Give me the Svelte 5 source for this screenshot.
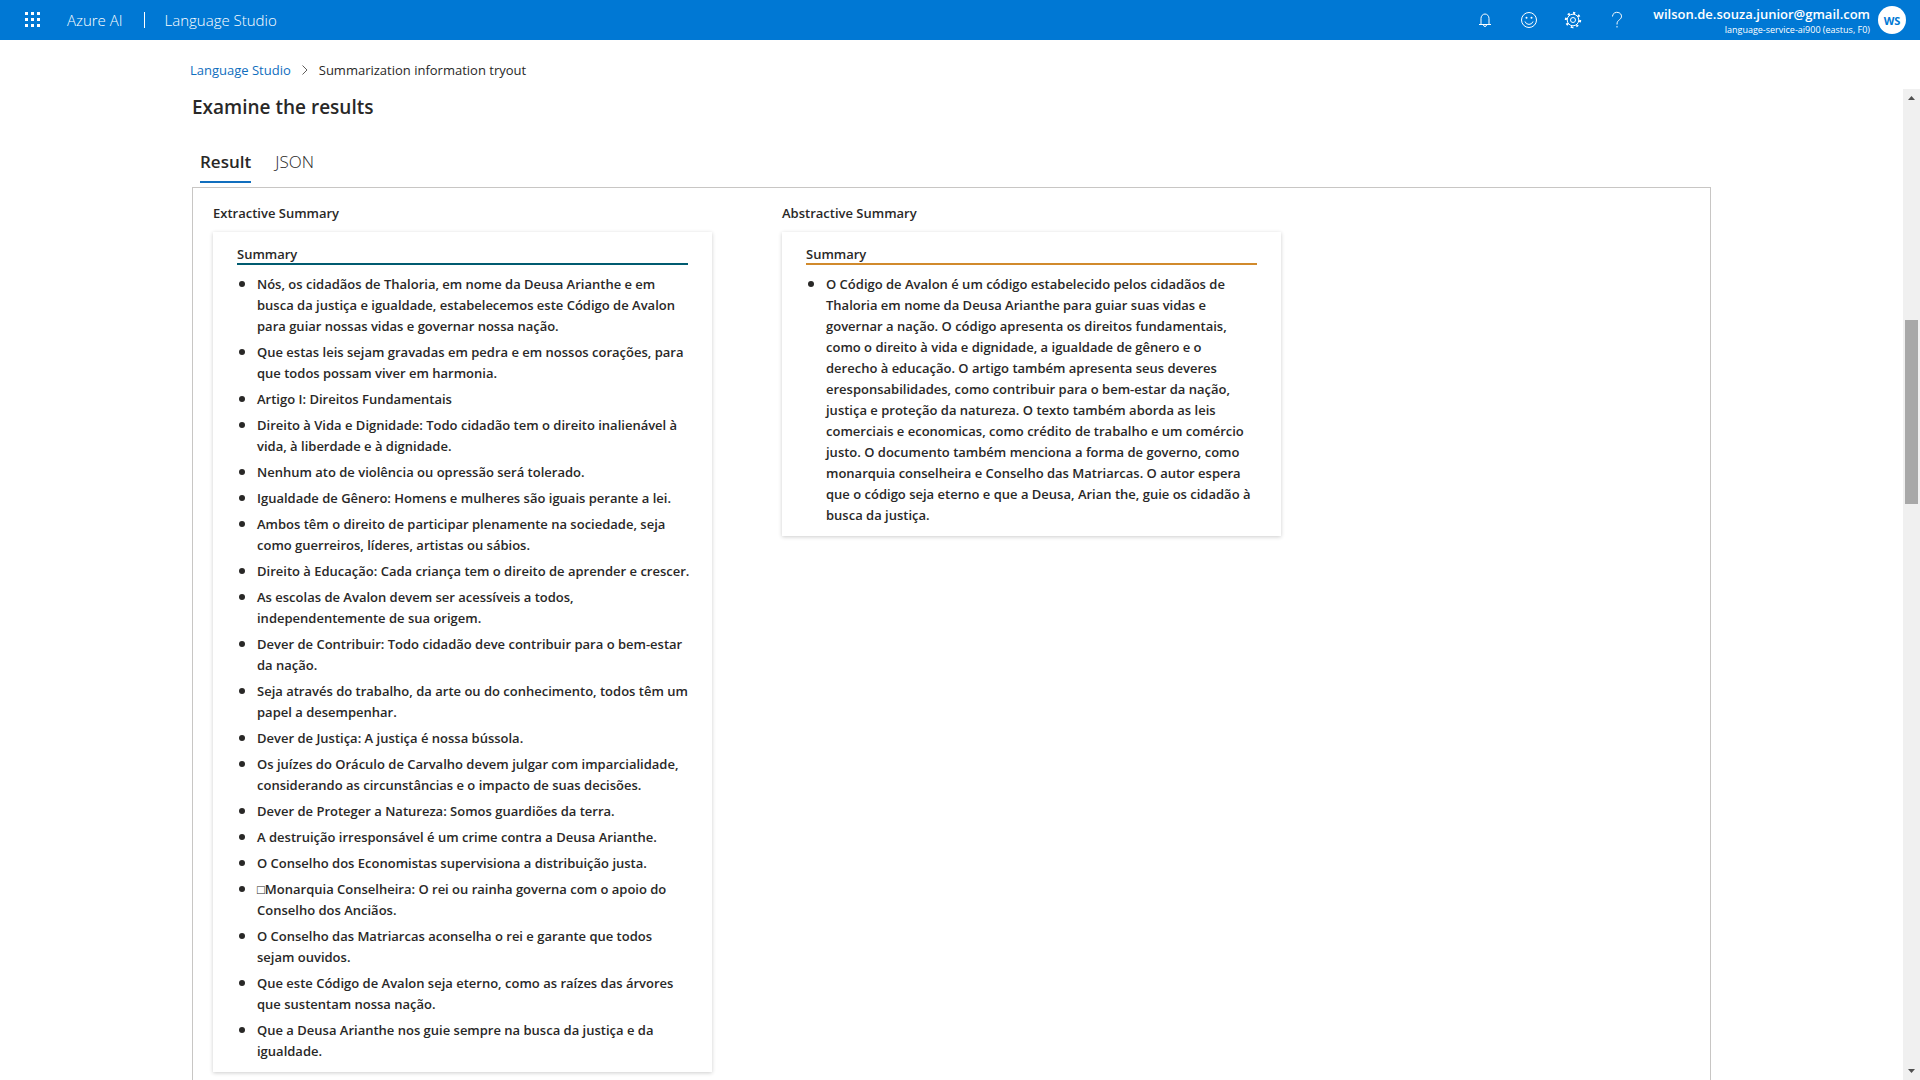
<script>
  const extractive = [
    'Nós, os cidadãos de Thaloria, em nome da Deusa Arianthe e em busca da justiça e igualdade, estabelecemos este Código de Avalon para guiar nossas vidas e governar nossa nação.',
    'Que estas leis sejam gravadas em pedra e em nossos corações, para que todos possam viver em harmonia.',
    'Artigo I: Direitos Fundamentais',
    'Direito à Vida e Dignidade: Todo cidadão tem o direito inalienável à vida, à liberdade e à dignidade.',
    'Nenhum ato de violência ou opressão será tolerado.',
    'Igualdade de Gênero: Homens e mulheres são iguais perante a lei.',
    'Ambos têm o direito de participar plenamente na sociedade, seja como guerreiros, líderes, artistas ou sábios.',
    'Direito à Educação: Cada criança tem o direito de aprender e crescer.',
    'As escolas de Avalon devem ser acessíveis a todos, independentemente de sua origem.',
    'Dever de Contribuir: Todo cidadão deve contribuir para o bem-estar da nação.',
    'Seja através do trabalho, da arte ou do conhecimento, todos têm um papel a desempenhar.',
    'Dever de Justiça: A justiça é nossa bússola.',
    'Os juízes do Oráculo de Carvalho devem julgar com imparcialidade, considerando as circunstâncias e o impacto de suas decisões.',
    'Dever de Proteger a Natureza: Somos guardiões da terra.',
    'A destruição irresponsável é um crime contra a Deusa Arianthe.',
    'O Conselho dos Economistas supervisiona a distribuição justa.',
    '□Monarquia Conselheira: O rei ou rainha governa com o apoio do Conselho dos Anciãos.',
    'O Conselho das Matriarcas aconselha o rei e garante que todos sejam ouvidos.',
    'Que este Código de Avalon seja eterno, como as raízes das árvores que sustentam nossa nação.',
    'Que a Deusa Arianthe nos guie sempre na busca da justiça e da igualdade.'
  ];
  const abstractive = [
    'O Código de Avalon é um código estabelecido pelos cidadãos de Thaloria em nome da Deusa Arianthe para guiar suas vidas e governar a nação. O código apresenta os direitos fundamentais, como o direito à vida e dignidade, a igualdade de gênero e o\nderecho à educação. O artigo também apresenta seus deveres eresponsabilidades, como contribuir para o bem-estar da nação, justiça e proteção da natureza. O texto também aborda as leis comerciais e economicas, como crédito de trabalho e um comércio justo. O documento também menciona a forma de governo, como monarquia conselheira e Conselho das Matriarcas. O autor espera que o código seja eterno e que a Deusa, Arian the, guie os cidadão à busca da justiça.'
  ];
  const columns = [
    { title: 'Extractive Summary', tone: 'teal', items: extractive },
    { title: 'Abstractive Summary', tone: 'gold', items: abstractive }
  ];
  let tab = $state('Result');
</script>

<div class="app">
  <header>
    <button class="waffle" aria-label="App launcher">
      <svg width="16" height="16" viewBox="0 0 16 16" fill="currentColor">
        {#each [0, 6, 12] as y}{#each [0, 6, 12] as x}<rect {x} {y} width="3" height="3" />{/each}{/each}
      </svg>
    </button>
    <a class="brand" href="#azure">Azure AI</a>
    <span class="divider"></span>
    <a class="brand" href="#studio">Language Studio</a>
    <div class="tools">
      <button aria-label="Notifications">
        <svg width="16" height="16" viewBox="0 0 16 16"><path d="M2 12.500h12M4 12.500V6.500a4 4.500 0 0 1 8 0v6M6.500 13c0 2 3 2 3 0" /></svg>
      </button>
      <button aria-label="Feedback">
        <svg width="18" height="18" viewBox="0 0 18 18"><circle cx="9" cy="9" r="7.500" /><path d="M5 10.500a4.200 4.200 0 0 0 8 0" /><circle class="dot" cx="6.500" cy="6.800" r="1" /><circle class="dot" cx="11.500" cy="6.800" r="1" /></svg>
      </button>
      <button aria-label="Settings">
        <svg width="18" height="18" viewBox="0 0 18 18"><circle cx="9" cy="9" r="5.800" /><circle cx="9" cy="9" r="2.500" /><circle class="teeth" cx="9" cy="9" r="7.200" pathLength="40" /></svg>
      </button>
      <button aria-label="Help">
        <svg width="16" height="18" viewBox="0 0 16 18"><path d="M3.500 5.500a4.500 4 0 1 1 7.200 3C9 10 8 10.500 8 13.500M8 15v1.500" /></svg>
      </button>
    </div>
    <div class="account">
      <span class="mail">wilson.de.souza.junior@gmail.com</span>
      <span class="resource">language-service-ai900 (eastus, F0)</span>
    </div>
    <button class="avatar">WS</button>
  </header>

  <nav class="crumbs" aria-label="Breadcrumb">
    <a href="#home">Language Studio</a>
    <svg width="6" height="10" viewBox="0 0 6 10"><path d="M.5.500 5 5 .5 9.500" /></svg>
    <span>Summarization information tryout</span>
  </nav>

  <div class="body">
    <main>
      <h1>Examine the results</h1>
      <div class="tabs" role="tablist">
        {#each ['Result', 'JSON'] as name}
          <button role="tab" aria-selected={tab === name} class:active={tab === name} onclick={() => (tab = name)}>{name}</button>
        {/each}
      </div>
      <section class="panel">
        {#each columns as col}
          <div class="column">
            <h2>{col.title}</h2>
            <article>
              <h3 class={col.tone}>Summary</h3>
              <ul>
                {#each col.items as item}<li>{item}</li>{/each}
              </ul>
            </article>
          </div>
        {/each}
      </section>
    </main>
    <div class="scrollbar" aria-hidden="true">
      <svg width="7" height="4" viewBox="0 0 7 4"><path d="M0 4 3.500 0 7 4z" /></svg>
      <div class="track"><div class="thumb"></div></div>
      <svg width="7" height="4" viewBox="0 0 7 4"><path d="M0 0 3.500 4 7 0z" /></svg>
    </div>
  </div>
</div>

<style>
  :global(body) { margin: 0; background: #fff; }
  .app {
    height: 100vh;
    display: flex;
    flex-direction: column;
    overflow: hidden;
    font-family: 'Open Sans', 'Noto Sans', sans-serif;
    font-size: 13px;
    color: #292827;
  }
  button { font: inherit; color: inherit; background: none; border: 0; padding: 0; cursor: pointer; }
  a { text-decoration: none; color: inherit; }
  h1, h2, h3, ul { margin: 0; padding: 0; }
  header {
    flex: none;
    display: flex;
    align-items: center;
    height: 40px;
    padding: 0 14px 0 25px;
    background: #0078d4;
    color: #fff;
  }
  .waffle { display: flex; margin-right: 26px; }
  .brand { font-size: 15px; font-weight: 300; }
  .divider { width: 1px; height: 16px; margin: 0 20px 0 21px; background: #fff; }
  .tools { display: flex; margin-left: auto; margin-right: 14px; }
  .tools button { display: grid; place-items: center; width: 44px; height: 40px; }
  .tools svg { fill: none; stroke: #fff; stroke-width: 1; }
  .tools .dot { fill: #fff; stroke: none; }
  .tools .teeth { stroke-width: 2; stroke-dasharray: 2 3; }
  .account { display: flex; flex-direction: column; align-items: flex-end; margin-right: 8px; padding-top: 3px; }
  .mail { font-size: 13px; line-height: 16px; font-weight: 600; }
  .resource { font-size: 9px; line-height: 15px; }
  .avatar { width: 28px; height: 28px; border-radius: 50%; background: #fff; color: #0078d4; font-size: 11px; font-weight: 700; }
  .crumbs { flex: none; display: flex; align-items: center; gap: 11px; height: 49px; padding: 10px 190px 0; box-sizing: border-box; }
  .crumbs a { color: #106ebe; }
  .crumbs svg { fill: none; stroke: #605e5c; }
  .body { flex: 1; min-height: 0; display: flex; }
  main { flex: 1; padding: 0 192px; overflow: hidden; }
  h1 { font-size: 19px; line-height: 36px; font-weight: 600; }
  .tabs { display: flex; gap: 24px; padding: 18px 8px 4px; }
  .tabs button { height: 40px; padding-bottom: 2px; font-size: 17px; font-weight: 300; border-bottom: 2px solid transparent; }
  .tabs .active { font-weight: 600; border-color: #106ebe; }
  .panel {
    display: grid;
    grid-template-columns: repeat(2, 499px);
    align-items: start;
    column-gap: 70px;
    padding: 14px 20px;
    border: 1px solid #c8c6c4;
  }
  h2 { font-size: 13px; line-height: 22px; font-weight: 600; margin-bottom: 8px; }
  article { padding: 14px 24px 10px; box-shadow: 0 1px 4px rgba(0, 0, 0, 0.2); }
  h3 { font-size: 13px; line-height: 17px; font-weight: 600; border-bottom: 2px solid; }
  .teal { border-color: #005b70; }
  .gold { border-color: #d18a2c; }
  ul { padding-top: 9px; margin-right: -3px; list-style: none; }
  li { display: flex; line-height: 21px; font-weight: 600; white-space: pre-line; }
  li::before { content: ''; flex: none; width: 6px; height: 6px; margin: 7px 12px 0 2px; border-radius: 50%; background: #292827; }
  li + li { margin-top: 5px; }
  .scrollbar { flex: none; display: flex; flex-direction: column; align-items: center; width: 17px; padding: 7px 0; box-sizing: border-box; background: #f0f0f0; }
  .scrollbar svg { fill: #505050; }
  .track { flex: 1; width: 13px; padding: 220px 0 0; }
  .thumb { height: 184px; background: #a8a8a8; }
</style>
